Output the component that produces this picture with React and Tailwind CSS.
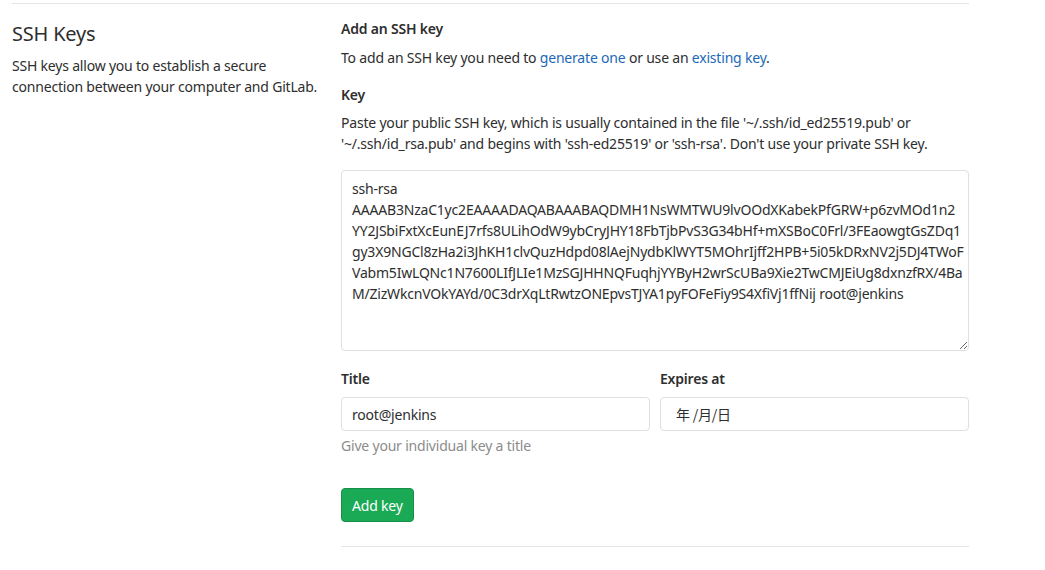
const KEY = `ssh-rsa
AAAAB3NzaC1yc2EAAAADAQABAAABAQDMH1NsWMTWU9lvOOdXKabekPfGRW+p6zvMOd1n2
YY2JSbiFxtXcEunEJ7rfs8ULihOdW9ybCryJHY18FbTjbPvS3G34bHf+mXSBoC0Frl/3FEaowgtGsZDq1
gy3X9NGCl8zHa2i3JhKH1clvQuzHdpd08lAejNydbKlWYT5MOhrIjff2HPB+5i05kDRxNV2j5DJ4TWoF
Vabm5IwLQNc1N7600LIfJLIe1MzSGJHHNQFuqhjYYByH2wrScUBa9Xie2TwCMJEiUg8dxnzfRX/4Ba
M/ZizWkcnVOkYAYd/0C3drXqLtRwtzONEpvsTJYA1pyFOFeFiy9S4XfiVj1ffNij root@jenkins`;

export default function App() {
  return (
    <div
      className="px-[12px] pt-[3px] text-[14px] leading-[21px] text-[#2e2e2e] tracking-[-0.2px]"
      style={{ fontFamily: '"Noto Sans", "Noto Sans CJK SC", sans-serif' }}
    >
      <div className="w-[957px] border-t border-[#e5e5e5] flex">
        <div className="w-[329px] shrink-0 pr-4">
          <h4 className="mt-[18px] text-[20px] leading-[24px] font-normal text-[#2e2e2e]">SSH Keys</h4>
          <p className="mt-[9px]">
            SSH keys allow you to establish a secure connection between your computer and GitLab.
          </p>
        </div>
        <div className="flex-1">
          <h5 className="mt-[14px] font-semibold">Add an SSH key</h5>
          <p className="mt-[8px]">
            To add an SSH key you need to{' '}
            <a href="#" className="text-[#1b69b6]">generate one</a> or use an{' '}
            <a href="#" className="text-[#1b69b6]">existing key</a>.
          </p>
          <label className="block mt-[16px] font-semibold">Key</label>
          <p className="mt-[7px]">
            Paste your public SSH key, which is usually contained in the file '~/.ssh/id_ed25519.pub' or
            '~/.ssh/id_rsa.pub' and begins with 'ssh-ed25519' or 'ssh-rsa'. Don't use your private SSH key.
          </p>
          <textarea
            className="block mt-[16px] w-full h-[181px] rounded border border-[#dfdfdf] px-[10px] pt-[7px] pb-2 leading-[21px] text-[14px] text-[#2e2e2e] whitespace-pre overflow-hidden resize-y outline-none tracking-[-0.2px]"
            style={{ fontFamily: '"Noto Sans", sans-serif' }}
            wrap="off"
            defaultValue={KEY}
          />
          <div className="mt-[17px] flex gap-[10px]">
            <div className="flex-1">
              <label className="block font-semibold">Title</label>
              <input
                type="text"
                defaultValue="root@jenkins"
                className="block mt-[8px] w-full h-[34px] rounded border border-[#dfdfdf] px-[10px] text-[14px] text-[#2e2e2e] outline-none tracking-[-0.2px]"
                style={{ fontFamily: '"Noto Sans", sans-serif' }}
              />
              <p className="mt-[4px] text-[#8c8c8c]">Give your individual key a title</p>
            </div>
            <div className="flex-1">
              <label className="block font-semibold">Expires at</label>
              <div
                className="mt-[8px] h-[34px] rounded border border-[#dfdfdf] pl-[15px] flex items-center text-[14px] text-[#2e2e2e]"
                style={{ fontFamily: '"Noto Sans CJK SC", "Noto Sans", sans-serif' }}
              >
                年 /月/日
              </div>
            </div>
          </div>
          <button
            type="button"
            className="mt-[32px] h-[34px] px-[10px] rounded-[4px] bg-[#1aaa55] border border-[#168f48] text-white text-[14px]"
          >
            Add key
          </button>
          <div className="mt-[24px] border-t border-[#e5e5e5]"></div>
        </div>
      </div>
    </div>
  );
}
